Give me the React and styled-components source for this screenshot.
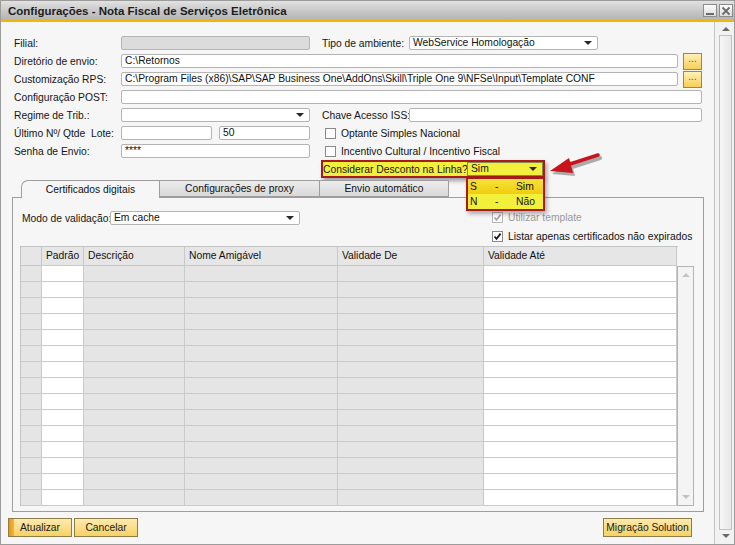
import React from 'react';
import styled, { createGlobalStyle } from 'styled-components';

const GlobalStyle = createGlobalStyle`
  html, body {
    margin: 0;
    padding: 0;
    background: #ffffff;
  }
  body {
    font-family: "Liberation Sans", Arial, sans-serif;
    font-size: 10.3px;
    color: #111111;
  }
  * {
    box-sizing: border-box;
  }
`;

const Window = styled.div`
  position: relative;
  width: 735px;
  height: 545px;
  border: 1px solid #9c9c9c;
  background: #f6f6f6;
  display: flex;
  flex-direction: column;
  overflow: hidden;
`;

const TitleBar = styled.div`
  height: 19px;
  display: flex;
  align-items: center;
  padding: 0 1px 0 7px;
  background: linear-gradient(#e2e2e2, #c4c4c4 60%, #b4b4b4);
  font-weight: bold;
  font-size: 11.5px;
  color: #1c1c1c;
`;

const Title = styled.div`
  flex: 1;
  white-space: nowrap;
`;

const WinButton = styled.div`
  width: 14px;
  height: 13px;
  margin-left: 2px;
  border: 1px solid #8c8c8c;
  background: linear-gradient(#fafafa, #dedede);
  display: flex;
  align-items: center;
  justify-content: center;
`;

const GoldLine = styled.div`
  height: 2px;
  background: #f2b705;
`;

const Body = styled.div`
  flex: 1;
  display: flex;
  min-height: 0;
`;

const Main = styled.div`
  flex: 1;
  display: flex;
  flex-direction: column;
`;

const Form = styled.div`
  padding: 12px 0 0 13px;
`;

const Row = styled.div`
  display: flex;
  align-items: center;
  height: 18px;
`;

const Label = styled.div`
  width: ${p => p.w}px;
  flex-shrink: 0;
  white-space: nowrap;
  color: ${p => (p.disabled ? '#9a9a9a' : '#151515')};
`;

const Text = styled.span`
  white-space: nowrap;
`;

const Spacer = styled.div`
  width: ${p => p.w}px;
  flex-shrink: 0;
`;

const Field = styled.div`
  position: relative;
  width: ${p => p.w}px;
  height: 14px;
  flex-shrink: 0;
  border: 1px solid #b4b4b4;
  border-radius: 2px;
  background: ${p => (p.disabled ? '#dcdcdc' : '#ffffff')};
  padding: 0 3px;
  line-height: 12px;
  white-space: nowrap;
  overflow: hidden;
`;

const Arrow = styled.span`
  position: absolute;
  right: 5px;
  top: 4px;
  width: 0;
  height: 0;
  border-left: 4px solid transparent;
  border-right: 4px solid transparent;
  border-top: 4px solid #2a2a2a;
`;

const Dots = styled.div`
  width: 19px;
  height: 17px;
  margin-left: 5px;
  flex-shrink: 0;
  border: 1px solid #9a8650;
  background: linear-gradient(#fff1b8, #f6cf55);
  display: flex;
  align-items: flex-start;
  justify-content: center;
  font-size: 10px;
  line-height: 10px;
  color: #6a5a2a;
`;

const Box = styled.div`
  width: 11px;
  height: 11px;
  flex-shrink: 0;
  border: 1px solid ${p => (p.disabled ? '#b8b8b8' : '#8a8a8a')};
  background: #ffffff;
  margin-right: 5px;
  display: flex;
  align-items: center;
  justify-content: center;
`;

const Highlight = styled.div`
  display: flex;
  align-items: center;
  width: 224px;
  height: 18px;
  border: 2px solid #a61b1b;
  background: #f3f03c;
  box-shadow: 2px 3px 4px rgba(0, 0, 0, 0.35);
`;

const YellowSelect = styled(Field)`
  background: #f3f03c;
  border-color: #8a8a48;
  border-radius: 0;
`;

const TabStrip = styled.div`
  display: flex;
  margin-top: 2px;
  padding-left: 21px;
  height: 17px;
`;

const Tab = styled.div`
  position: relative;
  z-index: ${p => (p.active ? 1 : 0)};
  width: ${p => p.w}px;
  height: ${p => (p.active ? 18 : 17)}px;
  margin-left: -1px;
  border: 1px solid #9e9e9e;
  border-bottom: ${p => (p.active ? 'none' : '1px solid #9e9e9e')};
  border-top-left-radius: ${p => (p.active ? 7 : 0)}px;
  background: ${p => (p.active ? '#f6f6f6' : 'linear-gradient(#ececec, #d9d9d9)')};
  display: flex;
  align-items: center;
  justify-content: center;
  white-space: nowrap;
`;

const Panel = styled.div`
  margin-left: 11px;
  width: 692px;
  height: 315px;
  border: 1px solid #9e9e9e;
  padding: 0 0 0 7px;
  display: flex;
  flex-direction: column;
`;

const PanelTop = styled.div`
  display: flex;
  height: 48px;
`;

const ModeCol = styled.div`
  width: 472px;
  padding: 11px 0 0 2px;
`;

const ChecksCol = styled.div`
  padding-top: 10px;
`;

const CheckRow = styled.div`
  display: flex;
  align-items: center;
  height: 19px;
`;

const Grid = styled.div`
  display: flex;
  flex-direction: column;
`;

const GridHead = styled.div`
  display: flex;
  height: 20px;
  width: 658px;
  border-top: 1px solid #c4c4c4;
  border-left: 1px solid #c4c4c4;
`;

const HeadCell = styled.div`
  width: ${p => p.w}px;
  flex-shrink: 0;
  background: #e6e6e6;
  border-right: 1px solid #c8c8c8;
  border-bottom: 1px solid #c8c8c8;
  padding: 3px 0 0 4px;
  white-space: nowrap;
`;

const GridBody = styled.div`
  display: flex;
`;

const Rows = styled.div`
  display: flex;
  flex-direction: column;
  border-left: 1px solid #c4c4c4;
`;

const GridRow = styled.div`
  display: flex;
  height: 16px;
`;

const Cell = styled.div`
  width: ${p => p.w}px;
  flex-shrink: 0;
  background: ${p => (p.white ? '#ffffff' : '#e5e5e5')};
  border-right: 1px solid #cacaca;
  border-bottom: 1px solid #cacaca;
`;

const GridScroll = styled.div`
  width: 17px;
  height: 240px;
  border: 1px solid #b4b4b4;
  background: #f4f4f4;
  display: flex;
  flex-direction: column;
  justify-content: space-between;
  align-items: center;
  padding: 6px 0;
`;

const Tri = styled.span`
  width: 0;
  height: 0;
  border-left: 4px solid transparent;
  border-right: 4px solid transparent;
  ${p => (p.up ? `border-bottom: 4px solid ${p.c};` : `border-top: 4px solid ${p.c};`)}
`;

const Footer = styled.div`
  display: flex;
  align-items: flex-start;
  padding: 6px 20px 0 7px;
  flex: 1;
`;

const Button = styled.div`
  width: ${p => p.w}px;
  height: 19px;
  margin-right: 2px;
  border: 1px solid #8f7d48;
  background: ${p =>
    p.primary
      ? 'linear-gradient(90deg, #f39212 0, #f7b53a 5px, transparent 5px), linear-gradient(#fdeab0, #f7d263)'
      : 'linear-gradient(#fdeab0, #f7d263)'};
  display: flex;
  align-items: center;
  justify-content: center;
  white-space: nowrap;
  color: #1a1a1a;
`;

const FooterGap = styled.div`
  flex: 1;
`;

const SideScroll = styled.div`
  width: 20px;
  border-left: 1px solid #c4c4c4;
  display: flex;
  flex-direction: column;
  align-items: center;
  padding: 5px 0 6px 2px;
  background: #f2f2f2;
`;

const Thumb = styled.div`
  flex: 1;
  width: 13px;
  margin: 4px 0 4px;
  border: 1px solid #c2c2c2;
  background: linear-gradient(90deg, #f6f6f6, #e8e8e8);
  display: flex;
  align-items: center;
  justify-content: center;
`;

const Grip = styled.div`
  width: 4px;
  height: 8px;
  background-image: radial-gradient(#b8b8b8 40%, transparent 45%);
  background-size: 2px 2px;
`;

const DropList = styled.div`
  position: absolute;
  left: 465px;
  top: 176px;
  width: 79px;
  height: 34px;
  border: 2px solid #a61b1b;
  background: #f3f03c;
  box-shadow: 2px 3px 4px rgba(0, 0, 0, 0.3);
  z-index: 5;
`;

const DropRow = styled.div`
  display: flex;
  height: 15px;
  align-items: center;
  padding-left: 2px;
  background: ${p => (p.selected ? 'linear-gradient(#f6e23a, #f0cc10)' : 'transparent')};
`;

const DropCell = styled.span`
  width: ${p => p.w}px;
`;

const Pointer = styled.svg`
  position: absolute;
  left: 544px;
  top: 146px;
  z-index: 6;
`;

const Check = ({ checked, disabled }) => (
  <Box disabled={disabled}>
    {checked && (
      <svg width="9" height="9" viewBox="0 0 9 9">
        <path d="M1.5 4.5 L3.5 6.8 L7.6 1.6" fill="none" stroke={disabled ? '#a8a8a8' : '#1a1a1a'} strokeWidth="1.8" />
      </svg>
    )}
  </Box>
);

const Select = ({ w, children }) => (
  <Field w={w}>
    {children}
    <Arrow />
  </Field>
);

const columns = [
  { w: 22, title: '', white: false },
  { w: 42, title: 'Padrão', white: true },
  { w: 101, title: 'Descrição', white: false },
  { w: 153, title: 'Nome Amigável', white: false },
  { w: 146, title: 'Validade De', white: false },
  { w: 193, title: 'Validade Até', white: true },
];

const rows = Array.from({ length: 15 }, (_, i) => i);

function App() {
  return (
    <>
      <GlobalStyle />
      <Window>
        <TitleBar>
          <Title>Configurações - Nota Fiscal de Serviços Eletrônica</Title>
          <WinButton>
            <svg width="10" height="10" viewBox="0 0 10 10">
              <rect x="1" y="7" width="8" height="2" fill="#6a6a6a" />
            </svg>
          </WinButton>
          <WinButton>
            <svg width="10" height="10" viewBox="0 0 10 10">
              <path d="M1.5 1.5 L8.5 8.5 M8.5 1.5 L1.5 8.5" stroke="#6a6a6a" strokeWidth="1.8" />
            </svg>
          </WinButton>
        </TitleBar>
        <GoldLine />
        <Body>
          <Main>
            <Form>
              <Row>
                <Label w={107}>Filial:</Label>
                <Field w={189} disabled />
                <Spacer w={12} />
                <Label w={87}>Tipo de ambiente:</Label>
                <Select w={189}>WebService Homologação</Select>
              </Row>
              <Row>
                <Label w={107}>Diretório de envio:</Label>
                <Field w={557}>C:\Retornos</Field>
                <Dots>...</Dots>
              </Row>
              <Row>
                <Label w={107}>Customização RPS:</Label>
                <Field w={557}>C:\Program Files (x86)\SAP\SAP Business One\AddOns\Skill\Triple One 9\NFSe\Input\Template CONF</Field>
                <Dots>...</Dots>
              </Row>
              <Row>
                <Label w={107}>Configuração POST:</Label>
                <Field w={581} />
              </Row>
              <Row>
                <Label w={107}>Regime de Trib.:</Label>
                <Select w={189} />
                <Spacer w={12} />
                <Label w={87}>Chave Acesso ISS:</Label>
                <Field w={293} />
              </Row>
              <Row>
                <Label w={107}>Último Nº/ Qtde&nbsp; Lote:</Label>
                <Field w={91} />
                <Spacer w={7} />
                <Field w={91}>50</Field>
                <Spacer w={15} />
                <Check />
                <Text>Optante Simples Nacional</Text>
              </Row>
              <Row>
                <Label w={107}>Senha de Envio:</Label>
                <Field w={189}>****</Field>
                <Spacer w={15} />
                <Check />
                <Text>Incentivo Cultural / Incentivo Fiscal</Text>
              </Row>
              <Row>
                <Spacer w={307} />
                <Highlight>
                  <Label w={144}>Considerar Desconto na Linha?</Label>
                  <YellowSelect w={76}>
                    Sim
                    <Arrow />
                  </YellowSelect>
                </Highlight>
              </Row>
            </Form>

            <TabStrip>
              <Tab w={139} active>Certificados digitais</Tab>
              <Tab w={161}>Configurações de proxy</Tab>
              <Tab w={130}>Envio automático</Tab>
            </TabStrip>
            <Panel>
              <PanelTop>
                <ModeCol>
                  <Row>
                    <Label w={88}>Modo de validação:</Label>
                    <Select w={190}>Em cache</Select>
                  </Row>
                </ModeCol>
                <ChecksCol>
                  <CheckRow>
                    <Check checked disabled />
                    <Label disabled>Utilizar template</Label>
                  </CheckRow>
                  <CheckRow>
                    <Check checked />
                    <Text>Listar apenas certificados não expirados</Text>
                  </CheckRow>
                </ChecksCol>
              </PanelTop>
              <Grid>
                <GridHead>
                  {columns.map((c, i) => (
                    <HeadCell key={i} w={i === 0 ? c.w - 1 : c.w}>{c.title}</HeadCell>
                  ))}
                </GridHead>
                <GridBody>
                  <Rows>
                    {rows.map(r => (
                      <GridRow key={r}>
                        {columns.map((c, i) => (
                          <Cell key={i} w={i === 0 ? c.w - 1 : c.w} white={c.white} />
                        ))}
                      </GridRow>
                    ))}
                  </Rows>
                  <GridScroll>
                    <Tri up c="#c4c4c4" />
                    <Tri c="#c4c4c4" />
                  </GridScroll>
                </GridBody>
              </Grid>
            </Panel>

            <Footer>
              <Button w={64} primary>Atualizar</Button>
              <Button w={64}>Cancelar</Button>
              <FooterGap />
              <Button w={89}>Migração Solution</Button>
            </Footer>
          </Main>
          <SideScroll>
            <Tri up c="#6a6a6a" />
            <Thumb>
              <Grip />
            </Thumb>
            <Tri c="#6a6a6a" />
          </SideScroll>
        </Body>

        <DropList>
          <DropRow selected>
            <DropCell w={25}>S</DropCell>
            <DropCell w={21}>-</DropCell>
            <DropCell w={25}>Sim</DropCell>
          </DropRow>
          <DropRow>
            <DropCell w={25}>N</DropCell>
            <DropCell w={21}>-</DropCell>
            <DropCell w={25}>Não</DropCell>
          </DropRow>
        </DropList>

        <Pointer width="64" height="36" viewBox="0 0 64 36">
          <g opacity="0.3" transform="translate(2 3)">
            <path d="M53 8 L22 18" stroke="#000" strokeWidth="4" strokeLinecap="round" />
            <path d="M5 24 L24 11 L28 26 Z" fill="#000" />
          </g>
          <path d="M53 8 L22 18" stroke="#c8141c" strokeWidth="3.5" strokeLinecap="round" />
          <path d="M5 24 L24 11 L28 26 Z" fill="#c8141c" />
        </Pointer>
      </Window>
    </>
  );
}

export default App;
